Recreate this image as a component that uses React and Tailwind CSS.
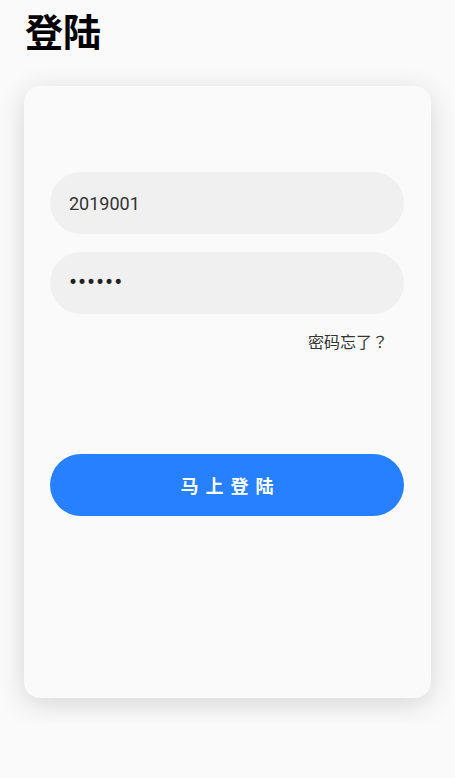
import React from "react";

const App = () => {
  return (
    <div className="min-h-screen bg-[#fafafa]">
      <div className="font-['Roboto','Noto_Sans_CJK_SC',sans-serif]">
        <h1 className="h-[60px] pl-[25px] pt-[5px] font-['Noto_Sans_CJK_SC',sans-serif] text-[38px] font-bold leading-[50px] text-black">
          登陆
        </h1>
        <div className="overflow-hidden px-[24px] pt-[26px] pb-[26px]">
          <div className="flex h-[612px] flex-col rounded-[16px] bg-[#fafafa] pl-[26px] pr-[27px] pt-[86px] shadow-[0_6px_28px_rgba(0,0,0,0.15)]">
            <div className="flex h-[62px] items-center rounded-full bg-[#f0f0f0] px-[19px] text-[18px] text-[#333]">
              2019001
            </div>
            <div className="mt-[18px] flex h-[62px] items-center rounded-full bg-[#f0f0f0] px-[18px] font-['DejaVu_Sans',sans-serif] text-[17px] tracking-[-1px] text-[#222]">
              ••••••
            </div>
            <div className="mt-[14px] pr-[16px] text-right font-['Noto_Sans_CJK_TC',sans-serif] text-[16px] leading-[26px] text-[#333]">
              密码忘了？
            </div>
            <button className="mt-[100px] h-[62px] rounded-full bg-[#2680ff] pl-[7px] font-['Noto_Sans_CJK_SC',sans-serif] text-[18px] font-bold tracking-[7px] text-white">
              马上登陆
            </button>
          </div>
        </div>
      </div>
    </div>
  );
};

export default App;
